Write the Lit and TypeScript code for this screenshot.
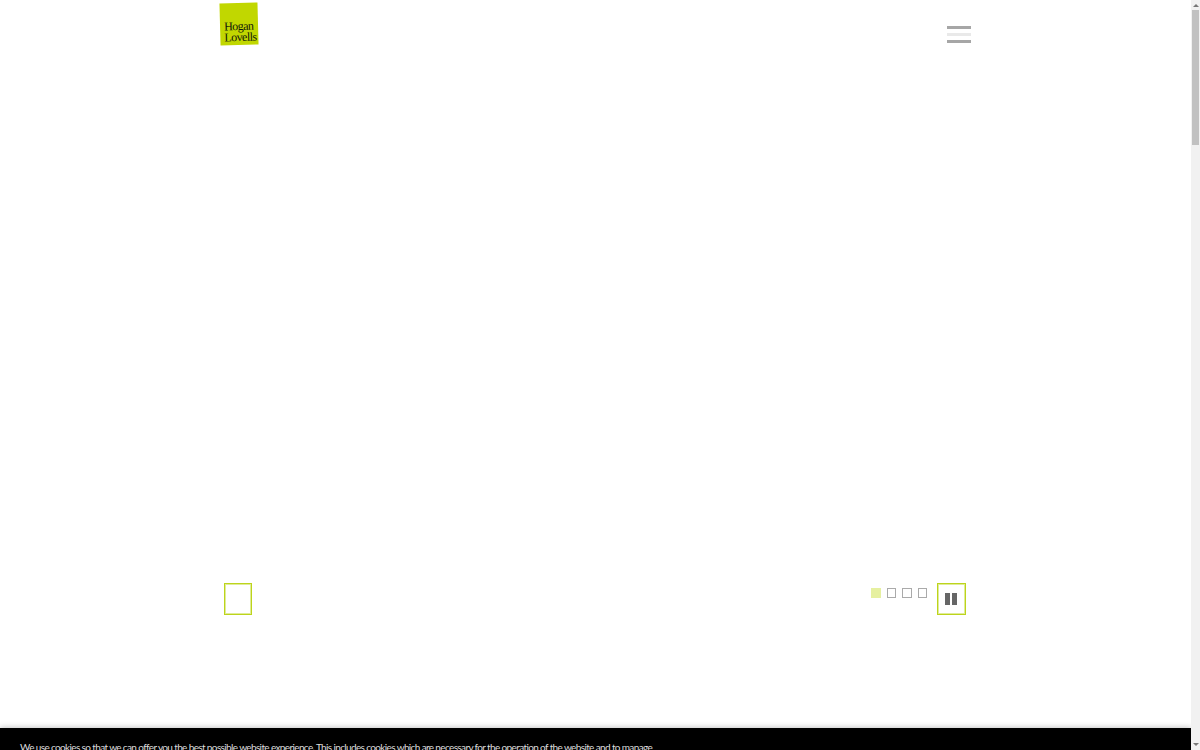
import { LitElement, html, css } from "lit";
import { customElement } from "lit/decorators.js";

@customElement("app-root")
export class AppRoot extends LitElement {
  static styles = css`
    :host { display: block; height: 750px; overflow: hidden; background: #fff; font-family: "Lato", sans-serif; }
    .page { display: flex; height: 750px; }
    .main { flex: 1; min-width: 0; display: flex; flex-direction: column; }
    .header { height: 66px; width: 752px; margin-left: 219px; display: flex; justify-content: space-between; align-items: flex-start; }
    .logo { margin-top: 3px; margin-left: 1px; width: 38px; height: 42px; background: #c1d700; transform: rotate(-1.5deg); display: flex; flex-direction: column; justify-content: flex-end; padding: 0 0 2px 4px; box-sizing: border-box; font: 12px/11px "Liberation Serif", serif; color: #10160a; letter-spacing: -0.55px; }
    .burger { margin-top: 26px; width: 24px; display: flex; flex-direction: column; gap: 4px; }
    .burger i { display: block; height: 3px; background: #a6a6a6; }
    .burger i.mid { background: #e9e9e9; }
    .hero { flex: 1; width: 752px; margin-left: 219px; display: flex; justify-content: space-between; align-items: flex-start; padding: 516px 5px 0 5px; box-sizing: border-box; }
    .btn { box-sizing: border-box; border: 1px solid #bdd41c; box-shadow: inset 0 0 0 1px #e0ec98; background: #fff; }
    .prev { width: 28px; height: 32px; margin-top: 1px; }
    .controls { display: flex; align-items: flex-start; }
    .dots { display: flex; gap: 6px; margin: 6px 10px 0 0; }
    .dot { box-sizing: border-box; width: 9.5px; height: 10px; border: 1px solid #aaa; }
    .dot.on { background: #e6f0a0; border-color: #e6f0a0; }
    .pause { width: 29px; height: 32px; margin-top: 1px; padding-right: 1px; display: flex; justify-content: center; align-items: center; gap: 2px; }
    .pause i { display: block; width: 5px; height: 12px; background: #666; }
    .cookie { height: 22px; background: #000; color: #dcdcdc; font-size: 10px; letter-spacing: -0.63px; line-height: 15px; padding: 12px 20px 0; box-sizing: border-box; overflow: hidden; white-space: nowrap; box-shadow: 0 0 6px rgba(0,0,0,.3); flex: none; }
    .scroll { width: 9px; flex: none; background: #f1f1f1; display: flex; flex-direction: column; align-items: center; position: relative; z-index: 1; }
    .up, .down { width: 0; height: 0; border-left: 3px solid transparent; border-right: 3px solid transparent; flex: none; }
    .up { border-bottom: 3px solid #777; margin-top: 4px; }
    .down { border-top: 3px solid #777; margin-bottom: 4px; }
    .thumb { width: 7px; height: 135px; margin-top: 3px; background: #c1c1c1; flex: none; }
    .gap { flex: 1; }
  `;

  render() {
    return html`
      <div class="page">
        <div class="main">
          <header class="header">
            <div class="logo"><span>Hogan</span><span>Lovells</span></div>
            <div class="burger"><i></i><i class="mid"></i><i></i></div>
          </header>
          <section class="hero">
            <div class="btn prev"></div>
            <div class="controls">
              <div class="dots">
                <div class="dot on"></div><div class="dot"></div><div class="dot"></div><div class="dot"></div>
              </div>
              <div class="btn pause"><i></i><i></i></div>
            </div>
          </section>
          <div class="cookie">We use cookies so that we can offer you the best possible website experience. This includes cookies which are necessary for the operation of the website and to manage</div>
        </div>
        <div class="scroll"><div class="up"></div><div class="thumb"></div><div class="gap"></div><div class="down"></div></div>
      </div>
    `;
  }
}
